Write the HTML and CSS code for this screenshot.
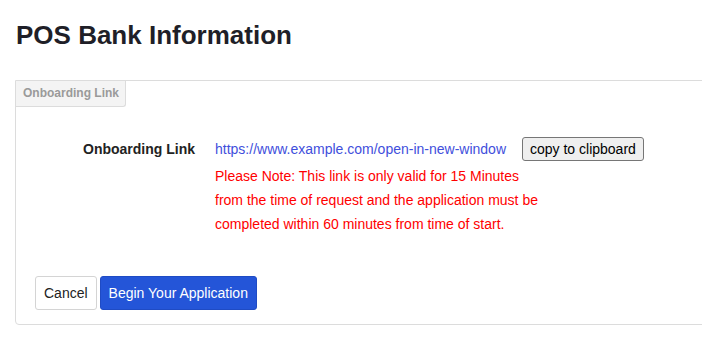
FILE: index.html
```html
<!DOCTYPE html>
<html lang="en">
<head>
    <meta charset="UTF-8">
    <meta name="viewport" content="width=device-width, initial-scale=1.0">
    <title>POS Bank Information</title>
    <link rel="stylesheet" href="styles.css">
</head>
<body>

    <h1>POS Bank Information</h1>

    <div class="panel">
        <div class="tab">Onboarding Link</div>
        <div class="panel-body">
            <div class="row">
                <div class="label">Onboarding Link</div>
                <div class="value">
                    <div class="link-line">
                        <a class="link" href="#">https://www.example.com/open-in-new-window</a>
                        <button class="copy" type="button">copy to clipboard</button>
                    </div>
                    <p class="note">Please Note: This link is only valid for 15 Minutes from the time of request and the application must be completed within 60 minutes from time of start.</p>
                </div>
            </div>
            <div class="actions">
                <button class="btn btn-cancel" type="button">Cancel</button>
                <button class="btn btn-primary" type="button">Begin Your Application</button>
            </div>
        </div>
    </div>

</body>
</html>
```

FILE: styles.css
```css
html {
    overflow: hidden;
}
body {
    margin: 0;
    padding: 0 0 0 15px;
    background-color: #fff;
    font-family: "Liberation Sans", Arial, sans-serif;
    color: #222;
}
h1 {
    margin: 20px 0 0 1px;
    font-size: 26px;
    line-height: 30px;
    font-weight: bold;
    color: #1f1f28;
}
.panel {
    margin-top: 30px;
    width: 720px;
    border: 1px solid #dcdcdc;
    border-radius: 0 0 0 4px;
}
.tab {
    display: inline-block;
    padding: 0 6px 0 7px;
    height: 25px;
    line-height: 25px;
    font-size: 12px;
    font-weight: bold;
    color: #9a9a9a;
    background-color: #f4f4f4;
    border-right: 1px solid #dcdcdc;
    border-bottom: 1px solid #dcdcdc;
    border-radius: 0 0 3px 0;
}
.panel-body {
    padding: 30px 19px 14px;
}
.row {
    display: grid;
    grid-template-columns: 160px auto;
    column-gap: 20px;
}
.label {
    text-align: right;
    font-size: 14px;
    font-weight: bold;
    line-height: 24px;
    color: #222;
}
.link-line {
    display: flex;
    align-items: center;
    gap: 16px;
    height: 24px;
}
.link {
    font-size: 14px;
    color: #3f4fdc;
    text-decoration: none;
}
.copy {
    font-family: "Liberation Sans", Arial, sans-serif;
    font-size: 14px;
    line-height: 16px;
    padding: 3px 7px;
    color: #000;
    background-color: #efefef;
    border: 1px solid #767676;
    border-radius: 3px;
}
.note {
    margin: 3px 0 0;
    max-width: 335px;
    font-size: 14px;
    line-height: 24px;
    color: #ff0000;
}
.actions {
    display: flex;
    gap: 3px;
    margin-top: 40px;
}
.btn {
    height: 34px;
    padding: 0 8px;
    font-family: "Liberation Sans", Arial, sans-serif;
    font-size: 14px;
    border-radius: 3px;
    cursor: pointer;
}
.btn-cancel {
    background-color: #fff;
    color: #222;
    border: 1px solid #d4d4d4;
}
.btn-primary {
    background-color: #2455d8;
    color: #fff;
    border: 1px solid #1f4bc4;
}
```
